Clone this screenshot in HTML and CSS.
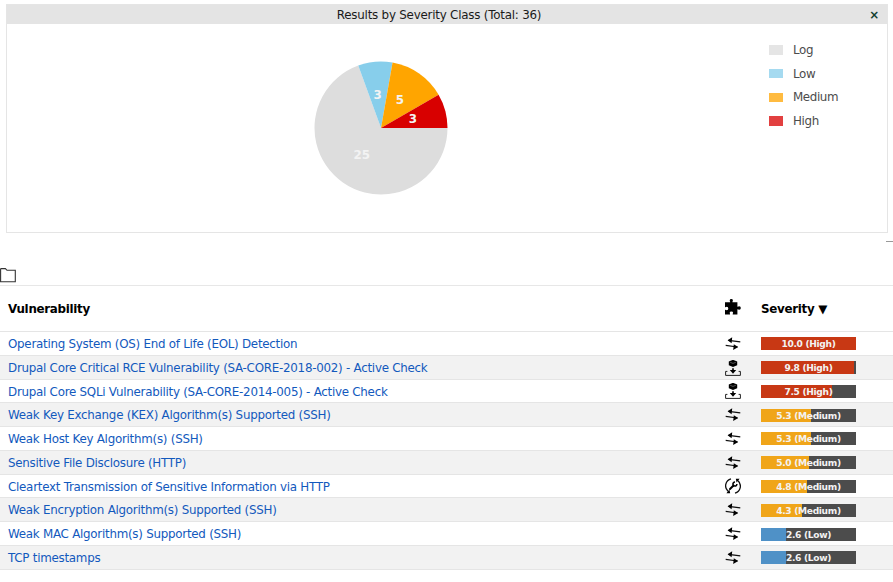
FILE: index.html
```html
<!DOCTYPE html>
<html lang="en">
<head>
<meta charset="utf-8">
<title>Results</title>
<link rel="stylesheet" href="styles.css">
</head>
<body>
<svg class="defs" width="0" height="0" aria-hidden="true">
  <symbol id="remote" viewBox="0 0 16 16">
    <path d="M3.5 4.3 15.3 5.9M.7 9.4 12.5 11" fill="none" stroke="#111" stroke-width="1.2"/>
    <path d="M2.6 4.2 7.2 1.3 6.6 7.2ZM13.2 11.1 8.8 8.2 8.2 14Z"/>
  </symbol>
  <symbol id="package" viewBox="0 0 16 16">
    <path d="M8-.2 12.2 1.4V5.2L8 7 3.8 5.2V1.4Z"/>
    <path d="M5.2 2.3 8 3.4 10.8 2.3" fill="none" stroke="#aaa" stroke-width=".5"/>
    <path d="M7.2 8.2H8.8V10.1H11.2L8 13.7 4.8 10.1H7.2Z"/>
    <path d="M2.4 11.4H.6V15.4H15.4V11.4H13.6" fill="none" stroke="#222" stroke-width="1"/>
  </symbol>
  <symbol id="mitigate" viewBox="0 0 16 16">
    <path d="M6 .9A7.2 7.2 0 0 0 3 13.2M10 15.1A7.2 7.2 0 0 0 13 2.8" fill="none" stroke="#111" stroke-width="1.3"/>
    <path d="M1.4 15.2 5.2 15.3 4.4 11.6ZM14.6 .8 10.8 .7 11.6 4.4Z"/>
    <path d="M5 11 8.5 7.5" fill="none" stroke="#000" stroke-width="2" stroke-linecap="round"/>
    <path d="M10 4.1A2 2 0 1 0 11.9 6" fill="none" stroke="#000" stroke-width="1.5"/>
  </symbol>
</svg>

<section class="panel">
  <header class="panel-head">
    <span class="panel-title">Results by Severity Class (Total: 36)</span>
    <span class="close">×</span>
  </header>
  <div class="panel-body">
    <svg class="pie" width="134" height="134" viewBox="-67 -67 134 134">
      <path fill="#ddd" d="M0 0 66.5 0A66.5 66.5 0 1 1 -22.74 -62.49Z"/>
      <path fill="#87ceeb" d="M0 0-22.74-62.49A66.5 66.5 0 0 1 11.55-65.49Z"/>
      <path fill="orange" d="M0 0 11.55-65.49A66.5 66.5 0 0 1 57.59-33.25Z"/>
      <path fill="#d80000" d="M0 0 57.59-33.25A66.5 66.5 0 0 1 66.5 0Z"/>
      <g class="pie-label">
        <text x="-19.3" y="31.4">25</text>
        <text x="-3.3" y="-29.4">3</text>
        <text x="19" y="-23.6">5</text>
        <text x="32" y="-4.6">3</text>
      </g>
    </svg>
    <ul class="legend">
      <li><i class="swatch log"></i>Log</li>
      <li><i class="swatch low"></i>Low</li>
      <li><i class="swatch medium"></i>Medium</li>
      <li><i class="swatch high"></i>High</li>
    </ul>
  </div>
</section>

<div class="toolbar">
  <svg class="folder" width="16" height="16" viewBox="0 0 16 16"><path d="M.6 14.7V2.2Q.6 1.6 1.2 1.6H5.4L7 3.3H15.3V14.7Z" fill="none" stroke="#333" stroke-width="1.1"/></svg>
  <span class="dash"></span>
</div>

<main class="table">
  <div class="row head">
    <span class="name">Vulnerability</span>
    <svg class="icon puzzle" viewBox="0 0 16 16"><path d="M0 3.2H5.1C5.5 2.7 4.7 2.1 4.7 1.4A1.6 1.4 0 0 1 7.9 1.4C7.9 2.1 7.1 2.7 7.5 3.2H12.4V7.5C12.9 8.1 13.4 7.2 14.3 7.2A1.5 1.8 0 0 1 14.3 10.8C13.4 10.8 12.9 9.8 12.4 10.4V15.5H7.8C7.3 15 8.1 14.5 8.1 13.8A1.7 1.4 0 0 0 4.7 13.8C4.7 14.5 5.4 15 5 15.5H0V11C.5 10.5 1 11.2 1.8 11.2A1.5 1.7 0 0 0 1.8 7.8C1 7.8.5 8.6 0 8Z"/></svg>
    <span class="sev">Severity ▼</span>
  </div>
  <div class="row"><a class="name">Operating System (OS) End of Life (EOL) Detection</a><svg class="icon"><use href="#remote"/></svg><span class="bar"><i class="fill f-high" style="width:100%"></i><b>10.0 (High)</b></span></div>
  <div class="row"><a class="name">Drupal Core Critical RCE Vulnerability (SA-CORE-2018-002) - Active Check</a><svg class="icon"><use href="#package"/></svg><span class="bar"><i class="fill f-high" style="width:98%"></i><b>9.8 (High)</b></span></div>
  <div class="row"><a class="name">Drupal Core SQLi Vulnerability (SA-CORE-2014-005) - Active Check</a><svg class="icon"><use href="#package"/></svg><span class="bar"><i class="fill f-high" style="width:75%"></i><b>7.5 (High)</b></span></div>
  <div class="row"><a class="name">Weak Key Exchange (KEX) Algorithm(s) Supported (SSH)</a><svg class="icon"><use href="#remote"/></svg><span class="bar"><i class="fill f-medium" style="width:53%"></i><b>5.3 (Medium)</b></span></div>
  <div class="row"><a class="name">Weak Host Key Algorithm(s) (SSH)</a><svg class="icon"><use href="#remote"/></svg><span class="bar"><i class="fill f-medium" style="width:53%"></i><b>5.3 (Medium)</b></span></div>
  <div class="row"><a class="name">Sensitive File Disclosure (HTTP)</a><svg class="icon"><use href="#remote"/></svg><span class="bar"><i class="fill f-medium" style="width:50%"></i><b>5.0 (Medium)</b></span></div>
  <div class="row"><a class="name">Cleartext Transmission of Sensitive Information via HTTP</a><svg class="icon"><use href="#mitigate"/></svg><span class="bar"><i class="fill f-medium" style="width:48%"></i><b>4.8 (Medium)</b></span></div>
  <div class="row"><a class="name">Weak Encryption Algorithm(s) Supported (SSH)</a><svg class="icon"><use href="#remote"/></svg><span class="bar"><i class="fill f-medium" style="width:43%"></i><b>4.3 (Medium)</b></span></div>
  <div class="row"><a class="name">Weak MAC Algorithm(s) Supported (SSH)</a><svg class="icon"><use href="#remote"/></svg><span class="bar"><i class="fill f-low" style="width:26%"></i><b>2.6 (Low)</b></span></div>
  <div class="row"><a class="name">TCP timestamps</a><svg class="icon"><use href="#remote"/></svg><span class="bar"><i class="fill f-low" style="width:26%"></i><b>2.6 (Low)</b></span></div>
</main>
</body>
</html>
```
FILE: styles.css
```css
* { box-sizing: border-box; }
body {
  margin: 0;
  background: #fff;
  font: 11.88px/16px "DejaVu Sans", sans-serif;
  letter-spacing: -.26px;
  color: #000;
  overflow: hidden;
}
.defs { display: block; height: 0; }
.panel {
  width: 882px;
  height: 229px;
  margin: 4px 0 0 6px;
  border: 1px solid #e5e5e5;
}
.panel-head {
  display: flex;
  align-items: center;
  height: 19px;
  padding-right: 8px;
  background: #e4e4e4;
  color: #1a1a1a;
}
.panel-title { flex: 1; text-align: center; padding-left: 2px; letter-spacing: -.22px; }
.close { width: 10px; color: #11402f; font-weight: bold; text-align: center; }
.panel-body {
  display: flex;
  justify-content: space-between;
  padding: 18px 38px 0 307px;
}
.pie { margin-top: 19px; }
.pie-label {
  fill: #f3f3f3;
  font-size: 11.88px;
  font-weight: bold;
  letter-spacing: 0;
  text-anchor: middle;
}
.legend {
  width: 80px;
  margin: 0;
  padding: 0;
  list-style: none;
  color: #4c4c4c;
  letter-spacing: -.38px;
}
.legend li { display: flex; align-items: center; height: 16px; margin-bottom: 7.7px; }
.swatch { width: 14px; height: 9.5px; margin-right: 10px; }
.log { background: #e5e5e5; }
.low { background: #a5daf0; }
.medium { background: #ffbb40; }
.high { background: #e24040; }
.toolbar {
  display: flex;
  justify-content: space-between;
  height: 52px;
  padding-top: 8px;
}
.folder { margin-top: 26px; }
.dash { width: 7px; height: 1px; background: #999; }
.table { border-top: 1px solid #e7e7e7; }
.row {
  display: flex;
  align-items: center;
  height: 23.78px;
  padding-left: 8px;
  border-bottom: 1px solid #e5e5e5;
}
.row:nth-child(odd) { background: #f2f2f2; }
.row.head { height: 46px; background: #fff; font-weight: bold; letter-spacing: -.3px; }
.name { width: 717px; white-space: nowrap; }
a.name { padding-top: 1.4px; color: #1259bd; }
.icon { width: 16px; height: 16px; margin: 1px 20px 0 0; }
.puzzle { margin-top: -3px; }
.bar {
  position: relative;
  width: 95px;
  height: 13px;
  margin-top: 1px;
  background: #4c4c4c;
  color: #f3f3f3;
  text-align: center;
  font-size: 9.1px;
  letter-spacing: -.32px;
  line-height: 15px;
}
.fill { position: absolute; inset: 0 auto 0 0; }
.bar b { position: relative; }
.f-high { background: #c83814; }
.f-medium { background: #f0a519; }
.f-low { background: #4f91c7; }
```
